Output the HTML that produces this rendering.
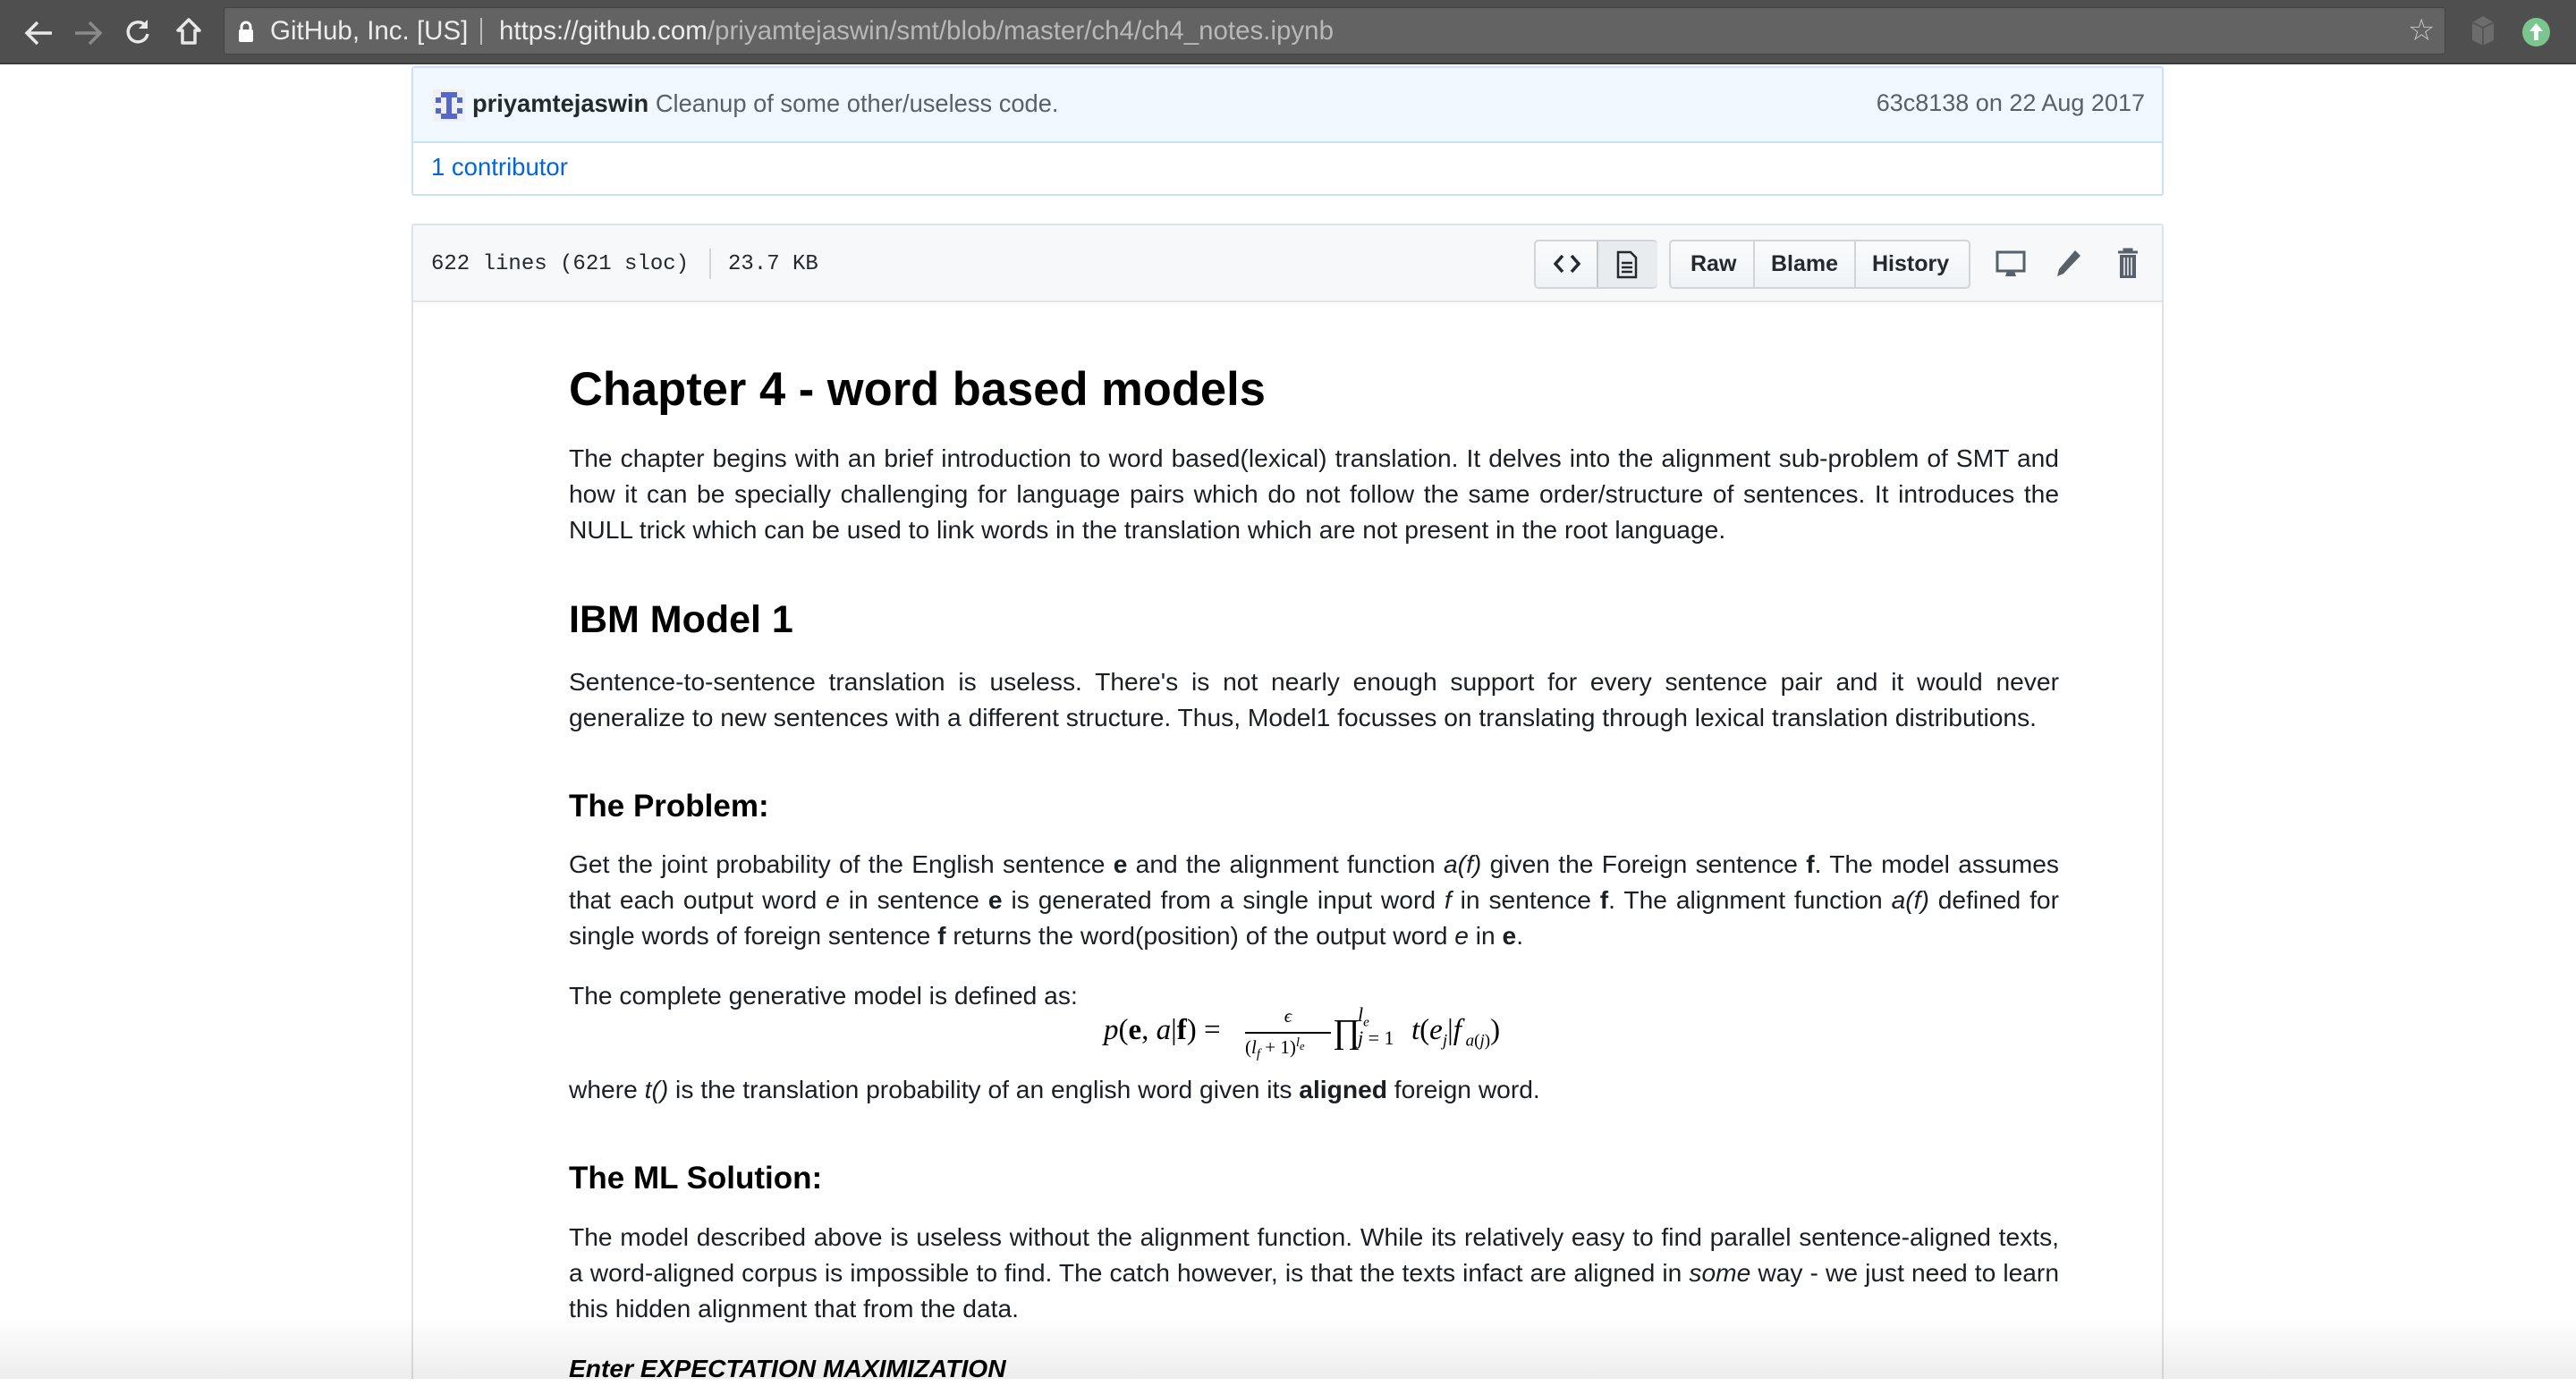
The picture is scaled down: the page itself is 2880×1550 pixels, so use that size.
<!DOCTYPE html>
<html><head><meta charset="utf-8">
<style>
*{margin:0;padding:0;box-sizing:border-box}
html,body{width:2880px;height:1542px;overflow:hidden;background:#fff;font-family:"Liberation Sans",Arial,sans-serif;color:#24292e}
.abs{position:absolute}
#bar{position:absolute;left:0;top:0;width:2880px;height:72px;background:#4f4f4f;border-bottom:2px solid #3a3a3a}
#addr{position:absolute;left:250px;top:8px;width:2484px;height:53px;background:#636363;border:1px solid #444;border-radius:3px}
.bt{color:#ececec;font-size:29.5px;line-height:53px;top:8px;white-space:nowrap}
#commit{left:460px;top:74px;width:1959px;height:145px;border:2px solid #c8e1ff;border-radius:3px}
#commit .top{position:absolute;left:0;top:0;right:0;height:84px;background:#f1f8ff;border-bottom:2px solid #c8e1ff}
.ct{font-size:27px;white-space:nowrap}
#file{left:460px;top:250px;width:1959px;height:1292px;border:2px solid #dfe2e5;border-bottom:none;border-radius:3px 3px 0 0}
#fh{position:absolute;left:0;top:0;right:0;height:86px;background:#f6f8fa;border-bottom:2px solid #e1e4e8}
.btn{position:absolute;top:16px;height:55px;background:linear-gradient(#fafbfc,#eff3f6);border:2px solid #d1d5da;border-radius:5px}
.btn span{position:absolute;top:0;line-height:51px;font-size:25px;font-weight:bold;color:#24292e}
.txt{position:absolute;left:636px;width:1666px;font-size:28.2px;line-height:40px;text-align:justify;color:#1b1f23}
h1,h2,h3{position:absolute;left:636px;font-weight:bold;color:#000;white-space:nowrap}
</style></head><body>
<div id="bar">
<svg class="abs" style="left:26px;top:22px" width="34" height="30" viewBox="0 0 34 30"><path d="M32 15H4M16 3L4 15l12 12" stroke="#e8e8e8" stroke-width="3.5" fill="none"/></svg>
<svg class="abs" style="left:82px;top:22px" width="34" height="30" viewBox="0 0 34 30"><path d="M2 15h28M18 3l12 12-12 12" stroke="#8a8a8a" stroke-width="3.5" fill="none"/></svg>
<svg class="abs" style="left:138px;top:19px" width="32" height="34" viewBox="0 0 32 34"><path d="M27 19a11 11 0 1 1-3-10" stroke="#e8e8e8" stroke-width="3.5" fill="none"/><path d="M27 3v10H17z" fill="#e8e8e8"/></svg>
<svg class="abs" style="left:196px;top:19px" width="30" height="32" viewBox="0 0 30 32"><path d="M15 3L3 15h5v14h14V15h5z" stroke="#e8e8e8" stroke-width="3.5" fill="none" stroke-linejoin="round"/></svg>
<div id="addr"></div>
<svg class="abs" style="left:265px;top:22px" width="20" height="26" viewBox="0 0 20 26"><path d="M5 12V8a5 5 0 0 1 10 0v4" stroke="#fff" stroke-width="3" fill="none"/><rect x="2" y="11" width="16" height="14" rx="2" fill="#fff"/></svg>
<div class="abs bt" style="left:302px">GitHub, Inc. [US]</div>
<div class="abs" style="left:537px;top:20px;width:2px;height:30px;background:#bbb"></div>
<div class="abs bt" style="left:558px">https://github.com<span style="color:#b8b8b8">/priyamtejaswin/smt/blob/master/ch4/ch4_notes.ipynb</span></div>
<div class="abs" style="left:2692px;top:14px;color:#c8c8c8;font-size:34px">☆</div>
<svg class="abs" style="left:2762px;top:16px" width="28" height="36" viewBox="0 0 28 36"><path d="M14 2L26 9v20l-12 6L2 29V9z" fill="#6c6c6c"/><path d="M2 9l12 6 12-6M14 15v20" stroke="#555" stroke-width="2" fill="none"/></svg>
<div class="abs" style="left:2820px;top:20px;width:31px;height:32px;border-radius:50%;background:#7bc68f"></div>
<svg class="abs" style="left:2825px;top:24px" width="21" height="24" viewBox="0 0 21 24"><path d="M10.5 2L3 11h5v10h5V11h5z" fill="#fff"/></svg>
</div>

<div id="commit" class="abs">
<div class="top"></div>
<svg class="abs" style="left:22px;top:24px" width="36" height="36" viewBox="0 0 12 12"><rect width="12" height="12" fill="#eef0f6"/><path d="M3 1h6v2H3zM1 3h2v2H1zM9 3h2v2H9zM5 3h2v6H5zM1 7h2v2H1zM9 7h2v2H9zM3 9h6v2H3z" fill="#5567c8"/></svg>
<div class="abs ct" style="left:66px;top:24px;color:#586069;font-size:27.3px"><b style="color:#24292e">priyamtejaswin</b> Cleanup of some other/useless code.</div>
<div class="abs ct" style="right:19px;top:24px;color:#586069">63c8138 on 22 Aug 2017</div>
<div class="abs ct" style="left:20px;top:95px;color:#0366d6;font-size:27.5px">1 contributor</div>
</div>

<div id="file" class="abs">
<div id="fh">
<div class="abs" style="left:20px;top:30px;font-family:'Liberation Mono',monospace;font-size:24px;color:#24292e;white-space:nowrap">622 lines (621 sloc)</div>
<div class="abs" style="left:331px;top:26px;width:2px;height:34px;background:#d1d5da"></div>
<div class="abs" style="left:352px;top:30px;font-family:'Liberation Mono',monospace;font-size:24px;color:#24292e">23.7 KB</div>
<div class="btn" style="left:1253px;width:138px">
 <div class="abs" style="left:68px;top:0;width:68px;height:51px;background:#e9ecef;border-left:2px solid #c3c7cc;border-radius:0 4px 4px 0"></div>
 <svg class="abs" style="left:20px;top:13px" width="30" height="24" viewBox="0 0 30 24"><path d="M10 3L2 12l8 9M20 3l8 9-8 9" stroke="#24292e" stroke-width="3.5" fill="none"/></svg>
 <svg class="abs" style="left:90px;top:10px" width="24" height="32" viewBox="0 0 24 32"><path d="M2 2h14l6 6v22H2z" stroke="#24292e" stroke-width="2.5" fill="none"/><path d="M6 14h12M6 19h12M6 24h12" stroke="#24292e" stroke-width="2.5"/></svg>
</div>
<div class="btn" style="left:1404px;width:337px">
 <span style="left:22px">Raw</span>
 <div class="abs" style="left:92px;top:0;width:2px;height:51px;background:#d1d5da"></div>
 <span style="left:112px">Blame</span>
 <div class="abs" style="left:205px;top:0;width:2px;height:51px;background:#d1d5da"></div>
 <span style="left:225px">History</span>
</div>
<svg class="abs" style="left:1769px;top:28px" width="34" height="32" viewBox="0 0 34 32"><rect x="2" y="2" width="30" height="21" stroke="#586069" stroke-width="3" fill="none"/><path d="M13 23h8l2 6H11z" fill="#586069"/></svg>
<svg class="abs" style="left:1836px;top:26px" width="30" height="34" viewBox="0 0 30 34"><path d="M22 2l6 6L9 28l-7 3 2-8z" fill="#586069"/></svg>
<svg class="abs" style="left:1904px;top:25px" width="26" height="36" viewBox="0 0 26 36"><path d="M2 5h22M9 5V2h8v3" stroke="#586069" stroke-width="3" fill="none"/><path d="M4 8h18v26H4z" fill="#586069"/><path d="M9 11v20M13 11v20M17 11v20" stroke="#f6f8fa" stroke-width="1.5"/></svg>
</div>
</div>

<h1 style="top:404px;font-size:52.5px;line-height:64px">Chapter 4 - word based models</h1>
<div class="txt" style="top:492px">The chapter begins with an brief introduction to word based(lexical) translation. It delves into the alignment sub-problem of SMT and how it can be specially challenging for language pairs which do not follow the same order/structure of sentences. It introduces the NULL trick which can be used to link words in the translation which are not present in the root language.</div>
<h2 style="top:667px;font-size:43px;line-height:52px">IBM Model 1</h2>
<div class="txt" style="top:742px">Sentence-to-sentence translation is useless. There's is not nearly enough support for every sentence pair and it would never generalize to new sentences with a different structure. Thus, Model1 focusses on translating through lexical translation distributions.</div>
<h3 style="top:882px;font-size:35px;line-height:40px">The Problem:</h3>
<div class="txt" style="top:946px">Get the joint probability of the English sentence <b>e</b> and the alignment function <i>a(f)</i> given the Foreign sentence <b>f</b>. The model assumes that each output word <i>e</i> in sentence <b>e</b> is generated from a single input word <i>f</i> in sentence <b>f</b>. The alignment function <i>a(f)</i> defined for single words of foreign sentence <b>f</b> returns the word(position) of the output word <i>e</i> in <b>e</b>.</div>
<div class="txt" style="top:1093px">The complete generative model is defined as:</div>
<div class="abs" style="left:1234px;top:1126px;width:480px;height:60px;font-family:'Liberation Serif',serif;font-size:33px;color:#000;white-space:nowrap">
 <span class="abs" style="left:0;top:8px"><i>p</i>(<b>e</b>, <i>a</i>|<b>f</b>) =</span>
 <span class="abs" style="left:158px;top:-2px;font-size:21px;width:96px;text-align:center"><i>ϵ</i></span>
 <div class="abs" style="left:158px;top:28px;width:96px;height:2px;background:#000"></div>
 <span class="abs" style="left:158px;top:32px;font-size:21px">(<i>l</i><sub style="font-size:15px"><i>f</i></sub> + 1)<sup style="font-size:15px"><i>l<sub>e</sub></i></sup></span>
 <span class="abs" style="left:256px;top:6px;font-size:38px">∏</span>
 <span class="abs" style="left:284px;top:-4px;font-size:22px"><i>l<sub style="font-size:15px">e</sub></i></span>
 <span class="abs" style="left:284px;top:22px;font-size:22px"><i>j</i> = 1</span>
 <span class="abs" style="left:344px;top:8px"><i>t</i>(<i>e</i><sub style="font-size:19px"><i>j</i></sub>|<i>f</i><sub style="font-size:19px"> <i>a</i>(<i>j</i>)</sub>)</span>
</div>
<div class="txt" style="top:1198px">where <i>t()</i> is the translation probability of an english word given its <b>aligned</b> foreign word.</div>
<h3 style="top:1298px;font-size:35px;line-height:40px">The ML Solution:</h3>
<div class="txt" style="top:1363px">The model described above is useless without the alignment function. While its relatively easy to find parallel sentence-aligned texts, a word-aligned corpus is impossible to find. The catch however, is that the texts infact are aligned in <i>some</i> way - we just need to learn this hidden alignment that from the data.</div>
<div class="txt" style="top:1510px;font-weight:bold;font-style:italic;color:#000">Enter EXPECTATION MAXIMIZATION</div>
<div class="abs" style="left:0;top:1470px;width:2880px;height:72px;background:linear-gradient(rgba(0,0,0,0),rgba(0,0,0,0.07))"></div>
</body></html>
